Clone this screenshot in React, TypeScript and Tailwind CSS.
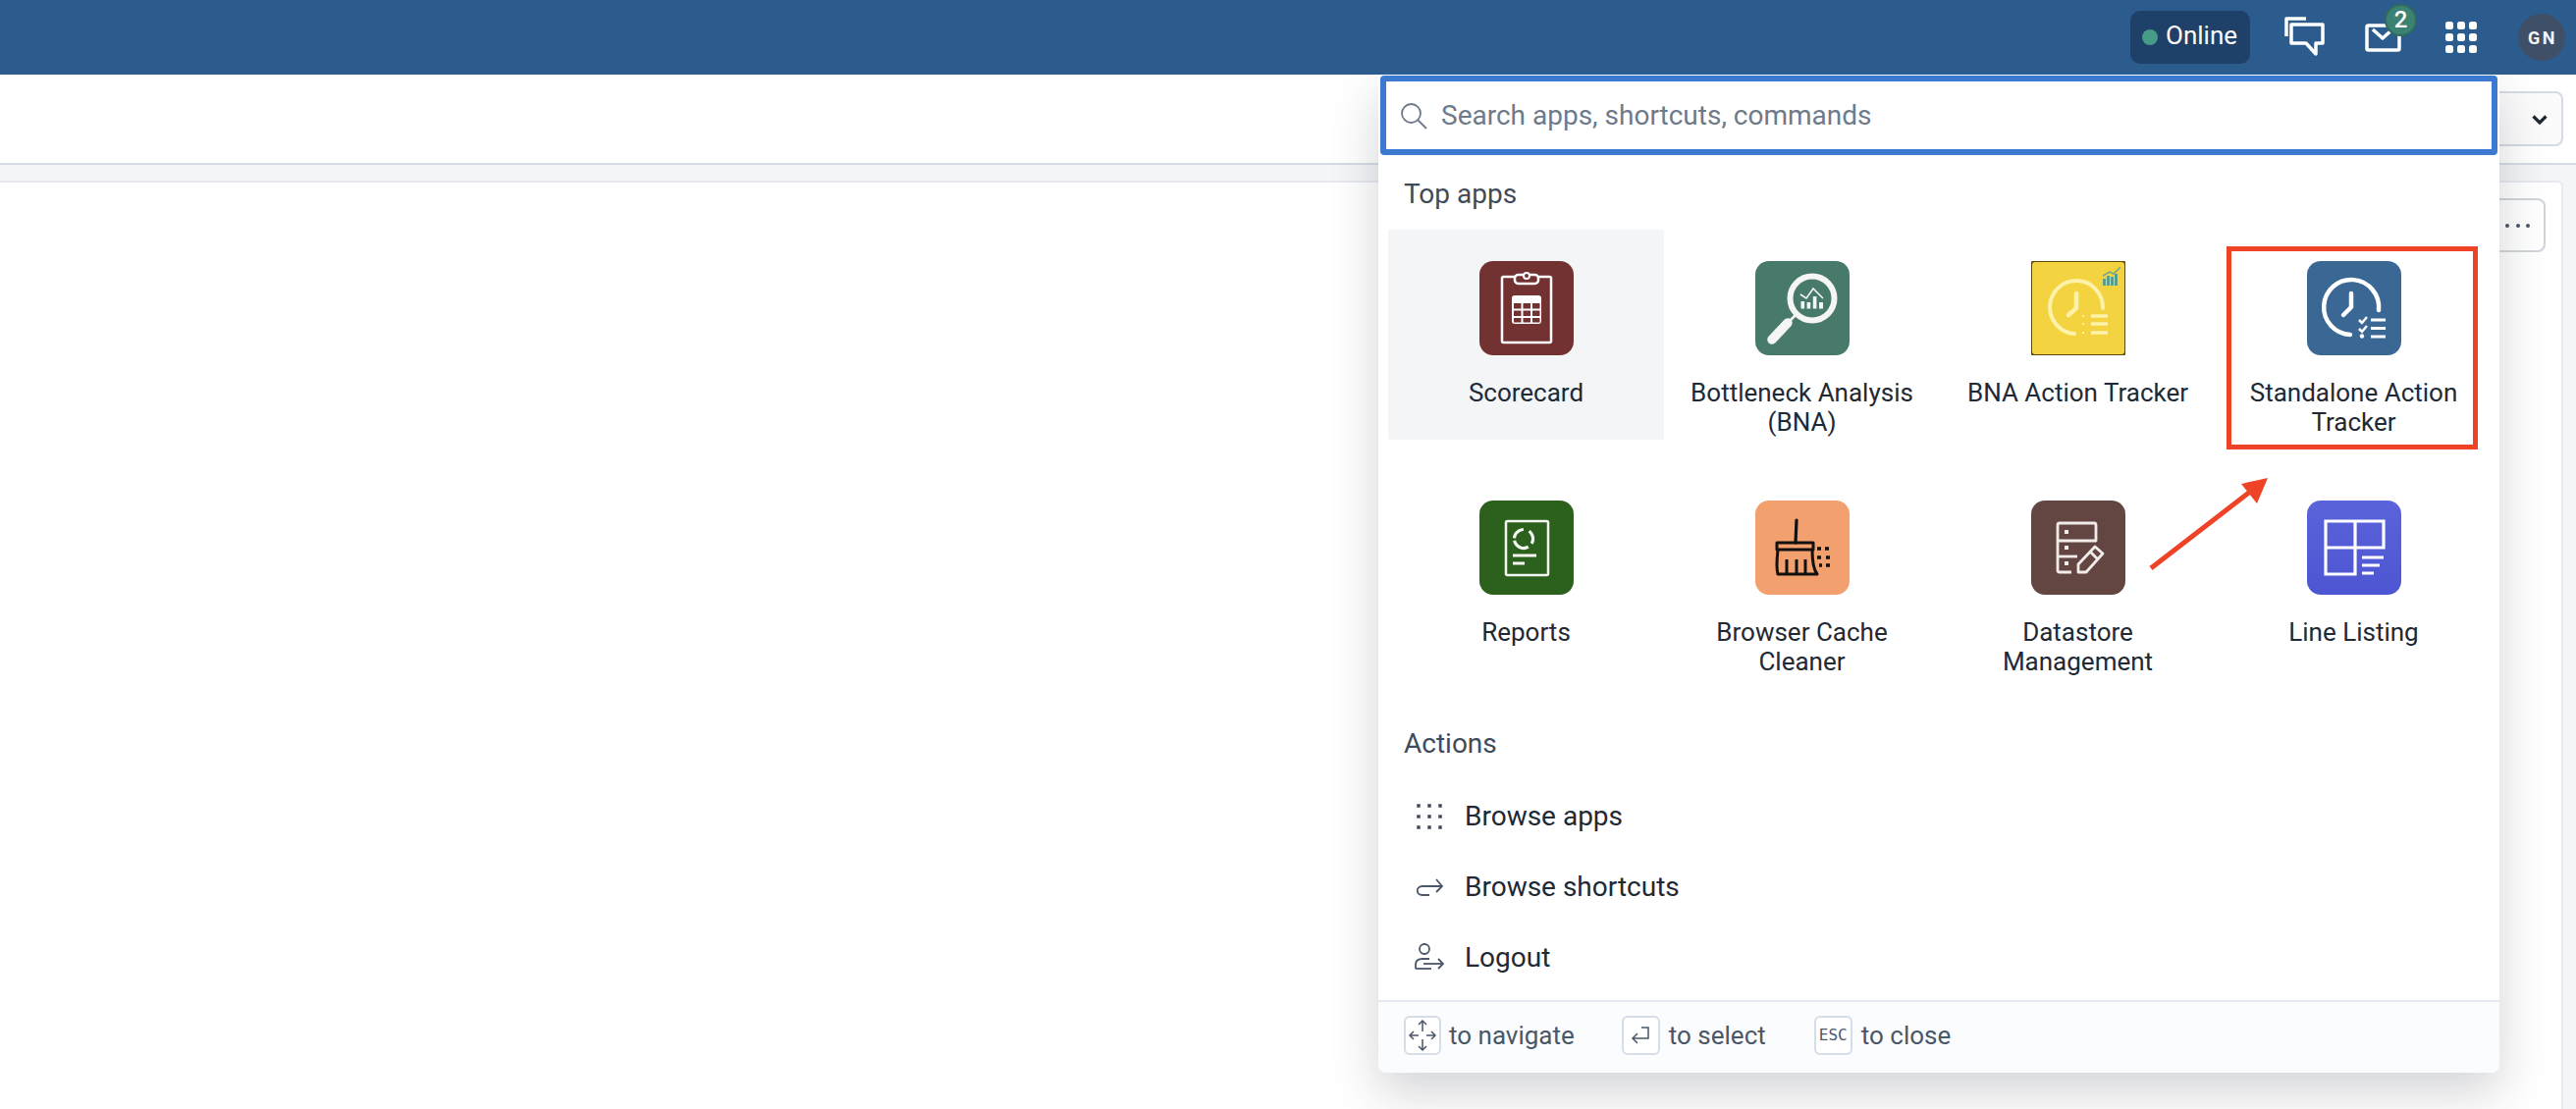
import type { ReactNode } from "react";

const FONT = "font-['Roboto','Liberation_Sans',sans-serif]";

function ScorecardIcon() {
  return (
    <svg viewBox="0 0 96 96" className="h-24 w-24">
      <rect width="96" height="96" rx="14" fill="#733232" />
      <rect x="23" y="16" width="50" height="67" rx="1.5" fill="none" stroke="#fff" strokeWidth="2.5" />
      <rect x="36" y="14" width="24" height="9" rx="3.5" fill="#733232" stroke="#fff" strokeWidth="2.5" />
      <circle cx="48" cy="15" r="3" fill="#733232" stroke="#fff" strokeWidth="2" />
      <rect x="33" y="35" width="30" height="29" rx="3" fill="#fff" />
      <g fill="#733232">
        <rect x="35" y="43" width="7.5" height="5.5" />
        <rect x="44.5" y="43" width="7.5" height="5.5" />
        <rect x="54" y="43" width="7.5" height="5.5" />
        <rect x="35" y="50.5" width="7.5" height="5.5" />
        <rect x="44.5" y="50.5" width="7.5" height="5.5" />
        <rect x="54" y="50.5" width="7.5" height="5.5" />
        <rect x="35" y="58" width="7.5" height="4.5" />
        <rect x="44.5" y="58" width="7.5" height="4.5" />
        <rect x="54" y="58" width="7.5" height="4.5" />
      </g>
    </svg>
  );
}

function BottleneckIcon() {
  return (
    <svg viewBox="0 0 96 96" className="h-24 w-24">
      <rect width="96" height="96" rx="14" fill="#487a6c" />
      <circle cx="58" cy="38" r="22.5" fill="none" stroke="#f4f5f4" strokeWidth="6" />
      <path d="M41 55L33 63" stroke="#f4f5f4" strokeWidth="2.5" />
      <path d="M33 63L17 80" stroke="#f4f5f4" strokeWidth="9.5" strokeLinecap="round" />
      <path d="M46 34L52 38L59 28L69 38" fill="none" stroke="#f4f5f4" strokeWidth="1.6" />
      <g fill="#f4f5f4">
        <rect x="46.5" y="41" width="3.6" height="7.5" />
        <rect x="52.6" y="42" width="3.6" height="6.5" />
        <rect x="58.8" y="36" width="3.6" height="12.5" />
        <rect x="65" y="42" width="4" height="6.5" />
      </g>
    </svg>
  );
}

function BnaTrackerIcon() {
  return (
    <svg viewBox="0 0 96 96" className="h-24 w-24">
      <rect width="96" height="96" rx="1" fill="#5c4a12" />
      <rect x="1" y="1" width="94" height="94" rx="3" fill="#f3d33f" />
      <path d="M73 48A27 27 0 1 0 44 74" fill="none" stroke="#fdf2a8" strokeWidth="4" strokeLinecap="round" />
      <path d="M46 33V48L38 55" fill="none" stroke="#fdf2a8" strokeWidth="4.5" strokeLinecap="round" strokeLinejoin="round" />
      <path d="M61 56H78M61 64H78M61 73H78" stroke="#fdf2a8" strokeWidth="3.5" />
      <path d="M52 56H54M52 64H54M52 73H54" stroke="#fdf2a8" strokeWidth="2" />
      <path d="M74.500 25V18M78.500 25V15M82.500 25V16M86.500 25V13" stroke="#4f9a95" strokeWidth="2.800" />
      <path d="M73 15L80 11L84 13L91 6" fill="none" stroke="#6fa88c" strokeWidth="1.500" />
    </svg>
  );
}

function StandaloneIcon() {
  return (
    <svg viewBox="0 0 96 96" className="h-24 w-24">
      <rect width="96" height="96" rx="14" fill="#3b6795" />
      <path d="M73 50A28 28 0 1 0 44 75" fill="none" stroke="#fff" strokeWidth="4.500" strokeLinecap="round" />
      <path d="M45 33V47L37 55" fill="none" stroke="#fff" strokeWidth="4.500" strokeLinecap="round" strokeLinejoin="round" />
      <path d="M53 60L56 63L61 57M53 69L56 72L61 66" fill="none" stroke="#fff" strokeWidth="2.500" />
      <circle cx="56" cy="76.5" r="2.200" fill="#fff" />
      <path d="M65 60H80M65 68.500H80M65 77H80" stroke="#fff" strokeWidth="3" />
    </svg>
  );
}

function ReportsIcon() {
  return (
    <svg viewBox="0 0 96 96" className="h-24 w-24">
      <rect width="96" height="96" rx="14" fill="#2c601d" />
      <rect x="27" y="21" width="43" height="55" rx="1.5" fill="none" stroke="#f3f6f1" strokeWidth="2.5" />
      <circle cx="45" cy="39" r="9.500" fill="none" stroke="#f3f6f1" strokeWidth="3.200" strokeDasharray="18 2.500 14 6 14 5" transform="rotate(60 45 39)" />
      <path d="M34 56H58M34 64H46" stroke="#f3f6f1" strokeWidth="3.200" />
    </svg>
  );
}

function CacheIcon() {
  return (
    <svg viewBox="0 0 96 96" className="h-24 w-24">
      <rect width="96" height="96" rx="14" fill="#f2a06d" />
      <path d="M42 20L41 43" stroke="#111" strokeWidth="3.200" strokeLinecap="round" />
      <path
        d="M22 43H59V50H22ZM23 50C22 60 21 68 23 75H63C59 70 58 60 58 50M32 75V60M42 75V60M51 75V60"
        fill="none"
        stroke="#111"
        strokeWidth="3"
        strokeLinejoin="round"
      />
      <path d="M63 49H67M71 49H75M63 58H67M72 58H76M65 66H68M72 66H76" stroke="#111" strokeWidth="3.500" />
    </svg>
  );
}

function DatastoreIcon() {
  return (
    <svg viewBox="0 0 96 96" className="h-24 w-24">
      <rect width="96" height="96" rx="14" fill="#634642" />
      <g fill="none" stroke="#f1ebe9" strokeWidth="2.800" strokeLinejoin="round">
        <path d="M27 41V25Q27 23 29 23H64Q66 23 66 25V41H27V71Q27 73 29 73H41" />
        <path d="M27 57H47" />
        <path d="M48 73V65L65 47L73 54L56 73Z" />
        <path d="M60 52L68 60" />
      </g>
      <g fill="#f1ebe9">
        <rect x="34" y="30" width="4" height="4" />
        <rect x="34" y="46" width="4" height="4" />
        <rect x="34" y="62" width="4" height="4" />
      </g>
    </svg>
  );
}

function LineListIcon() {
  return (
    <svg viewBox="0 0 96 96" className="h-24 w-24">
      <defs>
        <linearGradient id="lineListBg" x1="0" y1="0" x2="0" y2="1">
          <stop offset="0" stopColor="#5b63da" />
          <stop offset="1" stopColor="#4e55d2" />
        </linearGradient>
      </defs>
      <rect width="96" height="96" rx="14" fill="url(#lineListBg)" />
      <path d="M19 21H78V48H19ZM19 48V75H49V21" fill="none" stroke="#fff" strokeWidth="3.200" />
      <path d="M56 58H78M56 66H74M56 74H68" stroke="#fff" strokeWidth="3.200" />
    </svg>
  );
}

const APPS: { name: ReactNode; icon: ReactNode; active?: boolean }[] = [
  { name: "Scorecard", icon: <ScorecardIcon />, active: true },
  { name: "Bottleneck Analysis (BNA)", icon: <BottleneckIcon /> },
  { name: "BNA Action Tracker", icon: <BnaTrackerIcon /> },
  { name: "Standalone Action Tracker", icon: <StandaloneIcon /> },
  { name: "Reports", icon: <ReportsIcon /> },
  { name: "Browser Cache Cleaner", icon: <CacheIcon /> },
  { name: "Datastore Management", icon: <DatastoreIcon /> },
  { name: "Line Listing", icon: <LineListIcon /> },
];

function Action({ icon, label }: { icon: ReactNode; label: string }) {
  return (
    <div className="flex h-[72px] items-center gap-[20px] pl-[36px] text-[28px] leading-[32px] text-[#212934]">
      <span className="flex w-[32px] justify-center">{icon}</span>
      <span>{label}</span>
    </div>
  );
}

function Key({ children, className }: { children: ReactNode; className: string }) {
  return (
    <span className={`flex h-[40px] items-center justify-center rounded-[6px] border-2 border-[#d5dde8] bg-white ${className}`}>
      {children}
    </span>
  );
}

function SearchPanel() {
  return (
    <div className="absolute left-[1404px] top-[76px] z-10 flex h-[1017px] w-[1142px] flex-col rounded-b-[8px] bg-white shadow-[0_20px_50px_rgba(33,41,52,0.2)]">
      <div className="mx-[2px] mt-[1px] flex h-[81px] items-center rounded-[4px] border-[6px] border-[#3b7ad0] bg-white pl-[14px]">
        <svg viewBox="0 0 28 28" className="h-[28px] w-[28px] shrink-0" fill="none" stroke="#6e7a8a" strokeWidth="1.800">
          <circle cx="11.500" cy="11.500" r="9.500" />
          <path d="M18.500 18.500L27 27" />
        </svg>
        <span className="ml-[14px] text-[28px] leading-[32px] text-[#6e7a8a]">Search apps, shortcuts, commands</span>
      </div>

      <div className="h-[76px] pl-[26px] pt-[24px] text-[28px] leading-[32px] text-[#404b5a]">Top apps</div>

      <div className="mx-[10px] grid grid-cols-[repeat(4,281px)] gap-y-[30px]">
        {APPS.map((app, i) => (
          <div
            key={i}
            className={`flex h-[214px] flex-col items-center px-[14px] pt-[32px] text-center text-[26px] leading-[30px] text-[#212934] ${app.active ? "rounded-[2px] bg-[#f3f5f7]" : ""}`}
          >
            <span className="mb-[23px] h-24 w-24">{app.icon}</span>
            <span>{app.name}</span>
          </div>
        ))}
      </div>

      <div className="pl-[26px] pt-[50px] text-[28px] leading-[32px] text-[#404b5a]">Actions</div>
      <div className="mt-[22px] flex flex-col">
        <Action
          label="Browse apps"
          icon={
            <svg viewBox="0 0 26 26" className="h-[26px] w-[26px]" fill="#3f4b5c">
              {[2, 13, 24].map((y) =>
                [2, 13, 24].map((x) => <rect key={`${x}-${y}`} x={x - 1.75} y={y - 1.75} width="3.500" height="3.500" />),
              )}
            </svg>
          }
        />
        <Action
          label="Browse shortcuts"
          icon={
            <svg viewBox="0 0 28 18" className="h-[18px] w-[28px]" fill="none" stroke="#4a5768" strokeWidth="1.800">
              <path d="M27 8H7C0 8 0 17 7 17H14" />
              <path d="M21 1L27 8L21 14" />
            </svg>
          }
        />
        <Action
          label="Logout"
          icon={
            <svg viewBox="0 0 30 30" className="h-[30px] w-[30px]" fill="none" stroke="#4a5768" strokeWidth="1.800">
              <circle cx="10" cy="6" r="5" />
              <path d="M1 26V22Q1 16 8 16H15" />
              <path d="M1 26H17" />
              <path d="M9 21H29" />
              <path d="M24 16L29 21L24 26" />
            </svg>
          }
        />
      </div>

      <div className="mt-auto flex h-[74px] items-center rounded-b-[8px] border-t-2 border-[#e5eaf0] bg-[#fbfcfe] pb-[4px] pl-[26px] text-[26px] leading-[30px] text-[#4a5768]">
        <Key className="w-[38px]">
          <svg viewBox="0 0 30 34" className="h-[34px] w-[30px]" fill="none" stroke="#4a5768" strokeWidth="1.500">
            <path d="M15 2V13M11 6L15 2L19 6M15 21V32M11 28L15 32L19 28M2 17H11M6 13L2 17L6 21M19 17H28M24 13L28 17L24 21" />
          </svg>
        </Key>
        <span className="ml-[8px]">to navigate</span>
        <Key className="ml-[48px] w-[39px]">
          <svg viewBox="0 0 22 20" className="h-[20px] w-[22px]" fill="none" stroke="#4a5768" strokeWidth="1.500">
            <path d="M12 2H19V13H3M8 8L3 13L8 18" />
          </svg>
        </Key>
        <span className="ml-[9px]">to select</span>
        <Key className="ml-[49px] w-[39px]">
          <span className="font-['DejaVu_Sans_Mono',monospace] text-[16px] font-medium leading-none text-[#4a5768]">ESC</span>
        </Key>
        <span className="ml-[9px]">to close</span>
      </div>
    </div>
  );
}

export default function App() {
  return (
    <div className={`relative flex h-[1130px] w-[2624px] flex-col overflow-hidden bg-white ${FONT}`}>
      <header className="relative z-20 flex h-[76px] shrink-0 items-center bg-[#2c5b8e] pl-[2170px] text-white">
        <div className="flex h-[54px] w-[122px] items-center rounded-[10px] bg-[#1f4068] pl-[12px]">
          <span className="h-[16px] w-[16px] rounded-full bg-[#469c87]" />
          <span className="ml-[8px] pb-[4px] text-[26px] leading-[30px]">Online</span>
        </div>
        <svg viewBox="0 0 42 42" className="ml-[35px] h-[42px] w-[42px]" fill="none" stroke="#fff" strokeWidth="3.500" strokeLinejoin="round">
          <path d="M22 2H2V20" />
          <path d="M7 8H39V27H32V38L22 27H7Z" />
        </svg>
        <div className="relative ml-[40px] h-[29px] w-[37px]">
          <svg viewBox="0 0 37 29" className="h-[29px] w-[37px]" fill="none" stroke="#fff" strokeWidth="3.500" strokeLinejoin="round">
            <rect x="2" y="2" width="33" height="25" rx="1.500" />
            <path d="M8 6L18 15L28 6" />
          </svg>
          <span className="absolute left-[20px] top-[-20px] flex h-[33px] w-[33px] items-center justify-center rounded-full border-2 border-[#2f6b5e] bg-[#3b8272] text-[24px] font-medium leading-none">
            2
          </span>
        </div>
        <div className="ml-[45px] grid h-[32px] w-[32px] grid-cols-3 gap-[4.500px]">
          {Array.from({ length: 9 }).map((_, i) => (
            <span key={i} className="rounded-[2.500px] bg-white" />
          ))}
        </div>
        <div className="ml-[42px] flex h-[48px] w-[48px] items-center justify-center rounded-full bg-[#404f68] pl-[2px] text-[18px] font-bold tracking-[2.500px] text-[#f3f5f7]">
          GN
        </div>
      </header>

      <div className="flex h-[92px] shrink-0 items-center justify-end border-b-2 border-[#d5dbe5] pr-[13px]">
        <div className="flex h-[56px] w-[80px] items-center justify-end rounded-[8px] border-2 border-[#d5dbe5] bg-[#fbfbfc] pr-[14px]">
          <svg viewBox="0 0 16 10" className="mt-[2px] h-[10px] w-[16px]" fill="none" stroke="#212934" strokeWidth="3.200">
            <path d="M1.500 1.500L8 8L14.500 1.500" />
          </svg>
        </div>
      </div>

      <div className="flex-1 bg-[#f3f5f7] pr-[13px] pt-[16px]">
        <div className="flex h-full items-start justify-end rounded-tr-[6px] border-r-2 border-t-2 border-[#e6e9ef] bg-white pr-[16px] pt-[16px]">
          <div className="flex h-[55px] w-[60px] items-center justify-end gap-[6.500px] rounded-[8px] border-2 border-[#d0d5dc] pr-[14px]">
            <span className="h-[4px] w-[4px] rounded-full bg-[#4a5768]" />
            <span className="h-[4px] w-[4px] rounded-full bg-[#4a5768]" />
            <span className="h-[4px] w-[4px] rounded-full bg-[#4a5768]" />
          </div>
        </div>
      </div>

      <SearchPanel />

      {/* annotation over the screenshot */}
      <div className="absolute left-[2268px] top-[251px] z-20 h-[207px] w-[256px] border-[5px] border-[#ee4327]" />
      <svg className="absolute left-[2180px] top-[480px] z-20 h-[110px] w-[140px]" viewBox="0 0 140 110">
        <path d="M11 99L112 21" stroke="#ee4327" strokeWidth="5" />
        <path d="M130 7L103 13L119 33Z" fill="#ee4327" />
      </svg>
    </div>
  );
}
